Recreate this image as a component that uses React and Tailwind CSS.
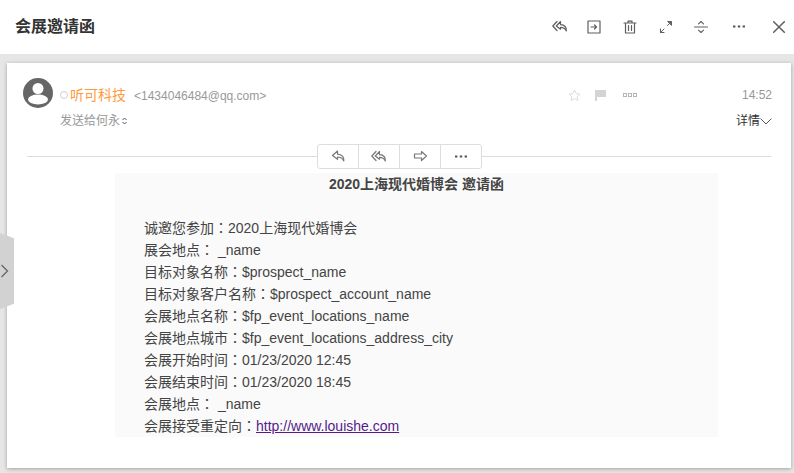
const S = ({ children, w = 16, h = 16, vb = "0 0 16 16", c = "#5f5f5f", sw = 1.2 }) => (
  <svg width={w} height={h} viewBox={vb} fill="none" stroke={c} strokeWidth={sw} strokeLinejoin="round" strokeLinecap="round">{children}</svg>
);
const ReplyAll = ({ c }) => (
  <S c={c} w={16} h={14} vb="0 0 16 14">
    <path d="M5 1.5 0.8 6 5 10.5" />
    <path d="M8.5 1.5 4.3 6l4.2 3.2V7.4c3 0 4.6 1 5.8 3.6.4-3.7-1.6-6.2-5.8-6.4z" />
  </S>
);
const Reply = ({ c }) => (
  <S c={c} w={15} h={13} vb="0 0 15 13">
    <path d="M6.5 1 1.5 5.5l5 3.8V7c3 0 5 1 6.3 4 .5-4-1.8-6.7-6.3-6.9z" />
  </S>
);
const Forward = ({ c }) => (
  <S c={c} w={15} h={13} vb="0 0 15 13">
    <path d="M8.5 1.5 13.5 6l-5 4.5V8H1.5V4h7z" />
  </S>
);
const Dots = ({ c = "#555" }) => (
  <svg width="12" height="3" viewBox="0 0 12 3" fill={c}><rect x="0" y="0.5" width="2.4" height="2" /><rect x="4.8" y="0.5" width="2.4" height="2" /><rect x="9.6" y="0.5" width="2.4" height="2" /></svg>
);
const C = () => <span className="font-['Noto_Sans_CJK_TC',sans-serif] leading-[0]">：</span>;

const lines = [
  ["诚邀您参加", "2020上海现代婚博会"],
  ["展会地点", " _name"],
  ["目标对象名称", "$prospect_name"],
  ["目标对象客户名称", "$prospect_account_name"],
  ["会展地点名称", "$fp_event_locations_name"],
  ["会展地点城市", "$fp_event_locations_address_city"],
  ["会展开始时间", "01/23/2020 12:45"],
  ["会展结束时间", "01/23/2020 18:45"],
  ["会展地点", " _name"],
];

export default function App() {
  return (
    <div className="relative w-[794px] h-[473px] overflow-hidden bg-[#e6e6e6] font-['Liberation_Sans','Noto_Sans_CJK_SC',sans-serif]">
      <header className="h-[54px] bg-white flex items-center pl-[15px] pb-[1px]">
        <h1 className="text-[16px] font-bold text-[#333] w-[536px]">会展邀请函</h1>
        <div className="flex items-center">
          <div className="w-[16px] ml-[1px] flex justify-center"><ReplyAll /></div>
          <div className="ml-[19px]">
            <S w={14} h={14} vb="0 0 14 14"><rect x="1" y="1" width="12" height="12" /><path d="M4 7h5.5M7.5 5l2 2-2 2" /></S>
          </div>
          <div className="ml-[22px]">
            <S w={14} h={14} vb="0 0 14 14"><path d="M1 3h12M5 3V1.2h4V3M2.5 3v10h9V3M5.5 5.5v5M8.5 5.5v5" /></S>
          </div>
          <div className="ml-[22px]">
            <S w={14} h={14} vb="0 0 14 14" sw={1}><path d="M8.5 5.5 12 2M1.5 12.5 5 9" /><path d="M9 1.5h3.5V5z" fill="#5f5f5f" /><path d="M1.5 9v3.5H5" /></S>
          </div>
          <div className="ml-[21px]">
            <S w={14} h={14} vb="0 0 14 14" sw={1.1}><path d="M0.5 7h13M4.5 3.8 7 1.5l2.5 2.3M4.5 10.2 7 12.5l2.5-2.3" /></S>
          </div>
          <div className="ml-[25px]"><Dots /></div>
          <div className="ml-[28px]">
            <S w={12} h={12} vb="0 0 12 12" sw={1.5}><path d="M.7.7l10.6 10.6M11.3.7.7 11.3" /></S>
          </div>
        </div>
      </header>

      <main className="absolute left-[7px] top-[63px] w-[784px] h-[405px] bg-white shadow-[0_1px_4px_rgba(0,0,0,0.3)]">
        <div className="flex pl-[16px] pr-[19px] pt-[15px]">
          <svg width="30" height="30" viewBox="0 0 30 30" className="shrink-0">
            <circle cx="15" cy="15" r="15" fill="#666" />
            <circle cx="15" cy="10.5" r="5.5" fill="#fff" />
            <ellipse cx="15" cy="21.5" rx="10" ry="5" fill="#fff" />
          </svg>
          <div className="ml-[7px] flex-1">
            <div className="flex items-center h-[20px] mt-[7px]">
              <span className="w-[8px] h-[8px] rounded-full border border-[#d0d0d0] mr-[2px]" />
              <span className="text-[14px] text-[#ff9a3c]">听可科技</span>
              <span className="text-[12px] text-[#999] ml-[8px] mt-[1px] w-[434px]">&lt;1434046484@qq.com&gt;</span>
              <svg width="13" height="13" viewBox="0 0 13 13" fill="none" stroke="#ddd"><path d="M6.5 1l1.7 3.6 3.8.5-2.8 2.6.7 3.8-3.4-1.9-3.4 1.9.7-3.8L1 5.1l3.8-.5z" /></svg>
              <svg width="11" height="11" viewBox="0 0 11 11" className="ml-[14px]" fill="#d4d4d4"><path d="M0 0h11v7H2v4H0z" /></svg>
              <span className="flex ml-[17px] gap-[1px]">
                <i className="block w-[4px] h-[4px] border border-[#b5b5b5]" />
                <i className="block w-[4px] h-[4px] border border-[#b5b5b5]" />
                <i className="block w-[4px] h-[4px] border border-[#b5b5b5]" />
              </span>
              <span className="ml-auto text-[12px] text-[#999]">14:52</span>
            </div>
            <div className="flex items-center h-[20px] mt-[6px] text-[12px] text-[#999]">
              <span>发送给何永</span>
              <svg width="5" height="8" viewBox="0 0 5 8" fill="none" stroke="#555" className="ml-[2px]"><path d="M.5 3 2.5 1l2 2M.5 5l2 2 2-2" /></svg>
              <span className="ml-auto flex items-center text-[12px] text-[#333]">详情
                <svg width="12" height="7" viewBox="0 0 12 7" fill="none" stroke="#555"><path d="M.5.5 6 6l5.5-5.5" /></svg>
              </span>
            </div>
          </div>
        </div>

        <div className="relative mx-[20px] mt-[25px] h-[1px] bg-[#ddd]">
          <div className="absolute left-[290px] top-[-12px] w-[165px] h-[25px] flex bg-white border border-[#ddd] rounded-[3px] divide-x divide-[#ddd]">
            <button className="w-[41px] flex items-center justify-center"><Reply c="#777" /></button>
            <button className="w-[41px] flex items-center justify-center"><ReplyAll c="#777" /></button>
            <button className="w-[41px] flex items-center justify-center"><Forward c="#777" /></button>
            <button className="flex-1 flex items-center justify-center"><Dots /></button>
          </div>
        </div>

        <article className="ml-[108px] mt-[16px] w-[603px] h-[264px] bg-[#fafafa] text-[14px] leading-[22px] text-[#444] pl-[29px]">
          <div className="font-bold leading-[22px] text-center pr-[29px]">2020上海现代婚博会 邀请函</div>
          <div className="h-[22px]" />
          <div className="whitespace-pre">
            {lines.map(([a, b], i) => <p key={i}>{a}<C />{b}</p>)}
            <p>会展接受重定向<C /><a className="text-[#551a8b] underline">http://www.louishe.com</a></p>
          </div>
        </article>
      </main>

      <div className="absolute left-0 top-[233px] w-[14px] h-[76px] bg-[#d2d2d2] [clip-path:polygon(0_0,100%_7%,100%_93%,0_100%)] flex items-center">
        <svg width="9" height="14" viewBox="0 0 9 14" fill="none" stroke="#666" strokeWidth="1.3"><path d="M1.5 1 7.5 7 1.5 13" /></svg>
      </div>
    </div>
  );
}
